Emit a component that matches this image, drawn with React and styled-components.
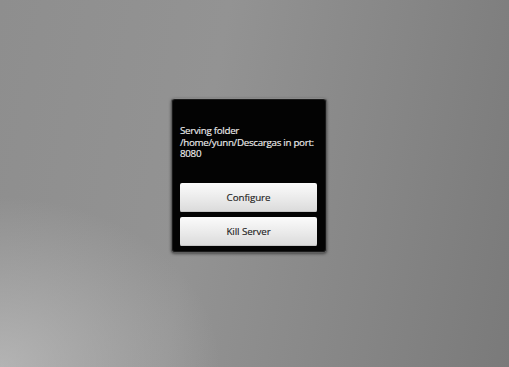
import styled, { createGlobalStyle } from "styled-components";

const Global = createGlobalStyle`
  html, body {
    margin: 0;
    padding: 0;
    height: 100%;
  }
  #root {
    height: 100%;
  }
`;

const Desktop = styled.div`
  width: 509px;
  height: 367px;
  box-sizing: border-box;
  padding: 98px 0 0 171px;
  background:
    radial-gradient(ellipse 220px 170px at 0% 100%, rgba(195, 195, 195, 0.7), rgba(195, 195, 195, 0) 100%),
    linear-gradient(100deg, #8e8e8e 0%, #939393 40%, #868686 72%, #7a7a7a 100%);
  font-family: "Open Sans", "DejaVu Sans", sans-serif;
`;

const Dialog = styled.div`
  width: 156px;
  height: 155px;
  box-sizing: border-box;
  background: #030303;
  border: 1px solid #5e5e5e;
  border-top-color: #8a8a8a;
  border-radius: 4px;
  box-shadow: 0 1px 3px rgba(0, 0, 0, 0.5), inset 0 0 0 1px #1a1a1a;
  padding: 26px 9px 0 8px;
  display: flex;
  flex-direction: column;
`;

const Message = styled.p`
  margin: 0;
  color: #ececec;
  font-size: 9.8px;
  line-height: 11.5px;
  letter-spacing: -0.3px;
  -webkit-text-stroke: 0.15px #ececec;
  height: 58px;
`;

const Actions = styled.div`
  display: flex;
  flex-direction: column;
  gap: 5px;
`;

const Button = styled.button`
  height: 29px;
  border: none;
  border-radius: 2px;
  background: linear-gradient(#fbfbfb, #e8e8e8 60%, #dadada);
  box-shadow: inset 0 -1px 0 #c4c4c4;
  color: #222;
  font-family: inherit;
  font-size: 9.8px;
  letter-spacing: -0.1px;
  -webkit-text-stroke: 0.15px #222;
  padding: 0;
  cursor: pointer;
`;

export default function App() {
  return (
    <>
      <Global />
      <Desktop>
        <Dialog>
          <Message>
            Serving folder
            <br />
            /home/yunn/Descargas in port:
            <br />
            8080
          </Message>
          <Actions>
            <Button>Configure</Button>
            <Button>Kill Server</Button>
          </Actions>
        </Dialog>
      </Desktop>
    </>
  );
}
